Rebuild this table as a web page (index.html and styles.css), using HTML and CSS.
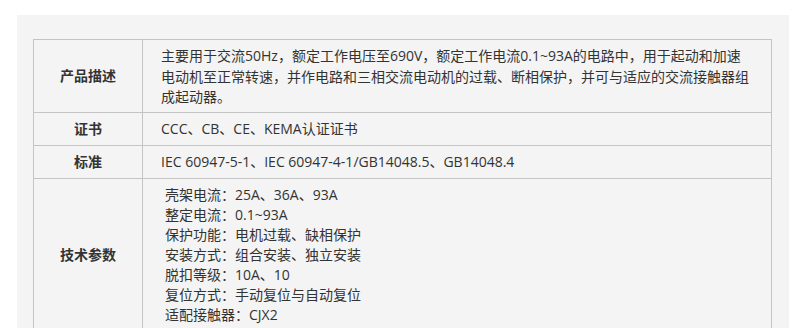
FILE: index.html
```html
<!DOCTYPE html>
<html lang="zh-CN">
<head>
    <meta charset="UTF-8">
    <meta name="viewport" content="width=device-width, initial-scale=1.0">
    <title>产品参数</title>
    <link rel="stylesheet" href="styles.css">
</head>
<body>
    <div class="painel">
        <table class="tabela">
            <tr class="linha-desc">
                <th>产品描述</th>
                <td>主要用于交流50Hz<span class="pt">，</span>额定工作电压至690V<span class="pt">，</span>额定工作电流0.1~93A的电路中<span class="pt">，</span>用于起动和加速电动机至正常转速<span class="pt">，</span>并作电路和三相交流电动机的过载、断相保护<span class="pt">，</span>并可与适应的交流接触器组成起动器。</td>
            </tr>
            <tr class="linha">
                <th>证书</th>
                <td>CCC、CB、CE、KEMA认证证书</td>
            </tr>
            <tr class="linha">
                <th>标准</th>
                <td>IEC 60947-5-1、IEC 60947-4-1/GB14048.5、GB14048.4</td>
            </tr>
            <tr class="linha-params">
                <th>技术参数</th>
                <td>
                    <ul class="params">
                        <li>壳架电流<span class="pt">：</span>25A、36A、93A</li>
                        <li>整定电流<span class="pt">：</span>0.1~93A</li>
                        <li>保护功能<span class="pt">：</span>电机过载、缺相保护</li>
                        <li>安装方式<span class="pt">：</span>组合安装、独立安装</li>
                        <li>脱扣等级<span class="pt">：</span>10A、10</li>
                        <li>复位方式<span class="pt">：</span>手动复位与自动复位</li>
                        <li>适配接触器<span class="pt">：</span>CJX2</li>
                    </ul>
                </td>
            </tr>
        </table>
    </div>
</body>
</html>
```

FILE: styles.css
```css
* {
    margin: 0;
    padding: 0;
    box-sizing: border-box;
}

body {
    font-family: "Open Sans", "Noto Sans CJK SC", sans-serif;
    font-size: 14px;
    color: #333;
    background-color: #fff;
    padding: 15px 11px 0 17px;
}

/* Fundo cinza atrás da tabela */
.painel {
    background-color: #f4f4f4;
    padding: 24px 17px 0 16px;
    height: 400px;
}

.tabela {
    width: 739px;
    border-collapse: collapse;
}

.tabela th,
.tabela td {
    border: 1px solid #c4c4c4;
    line-height: 20px;
    vertical-align: middle;
}

.tabela th {
    width: 109px;
    font-weight: bold;
    text-align: center;
}

.tabela td {
    padding: 6px 18px;
    text-align: left;
}

.linha-desc td {
    line-height: 20.5px;
    padding-bottom: 4px;
}

/* vírgula e dois-pontos centralizados, sem aumentar a linha */
.pt {
    font-family: "Noto Sans CJK TC", sans-serif;
    line-height: 0;
}

.params {
    list-style: none;
    padding-left: 4px;
}
```
